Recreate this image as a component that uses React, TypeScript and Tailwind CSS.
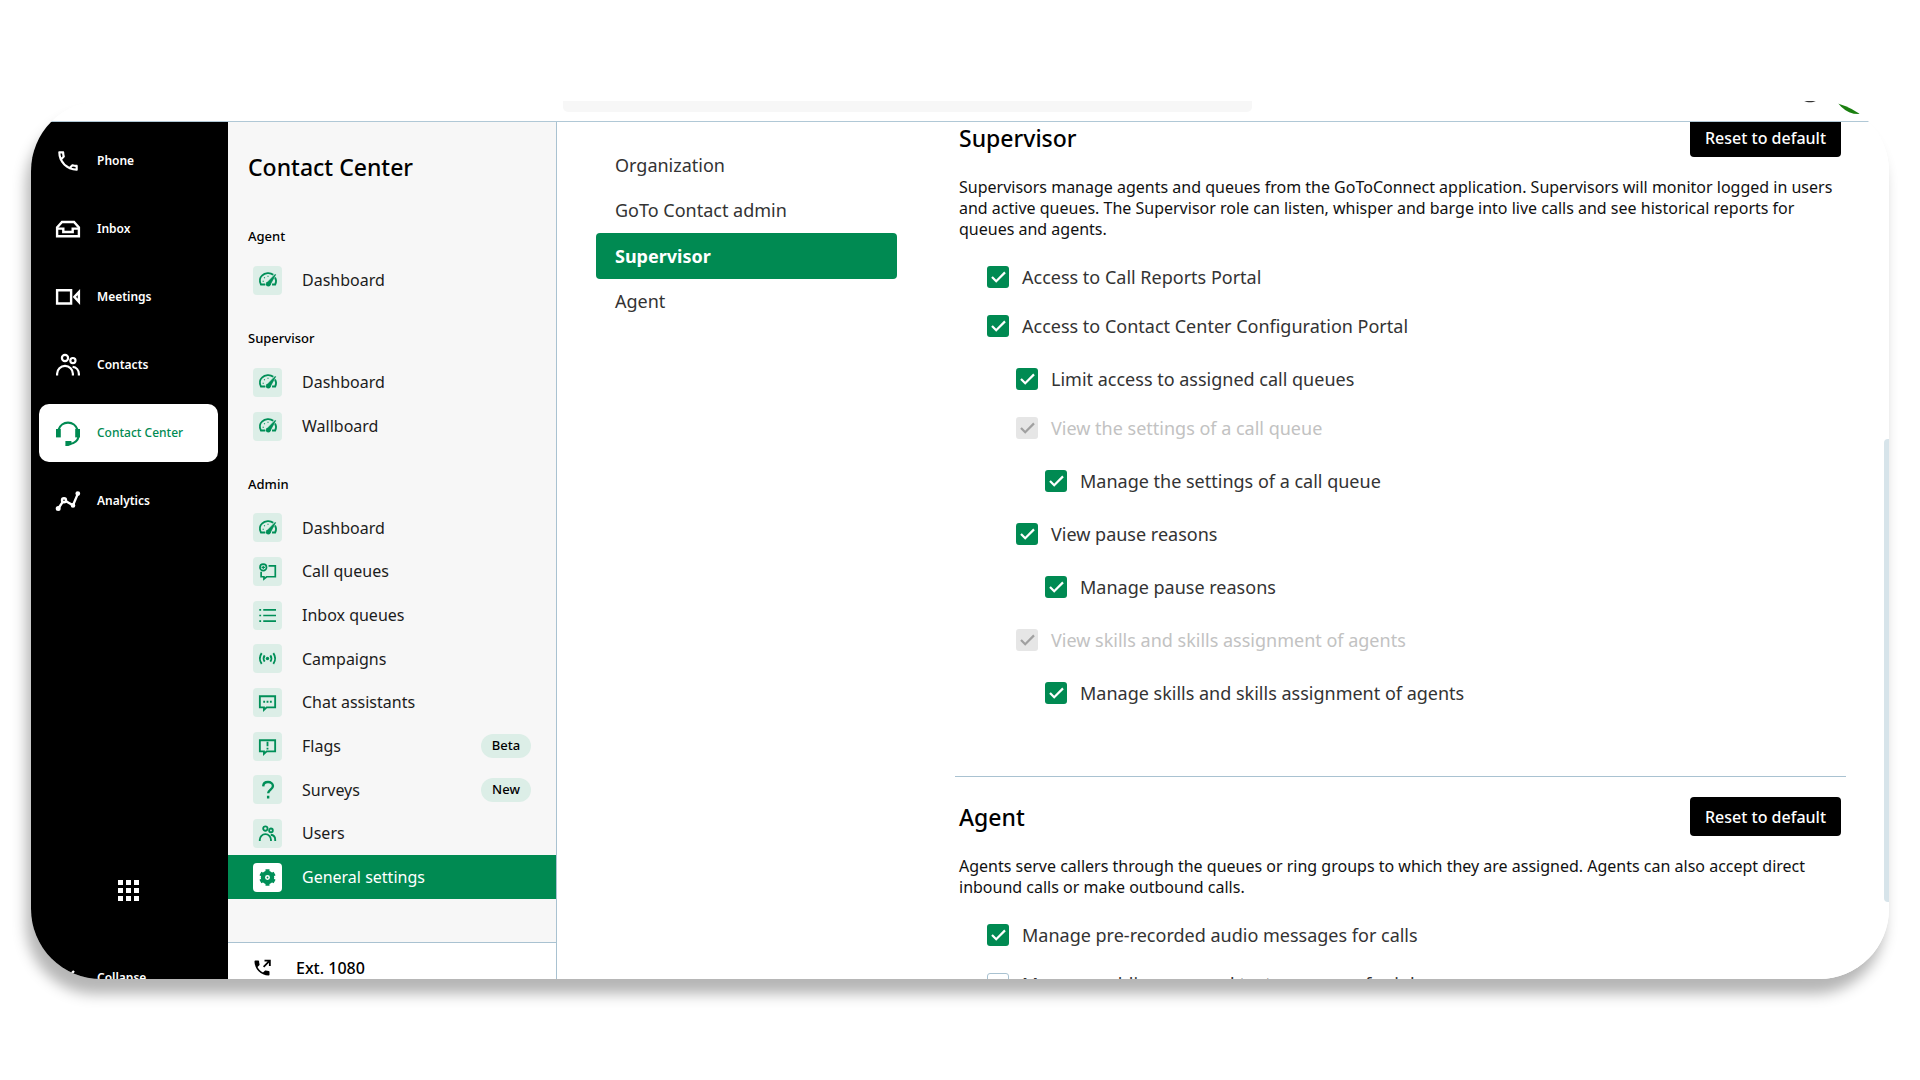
import { useId, type ReactNode } from "react";
import { MdOutlinePhone, MdOutlineHelpOutline } from "react-icons/md";

/* ---------- icons ---------- */

function Stroke({ size, width = 2, children }: { size: number; width?: number; children: ReactNode }) {
  return (
    <svg
      width={size}
      height={size}
      viewBox="0 0 24 24"
      fill="none"
      stroke="currentColor"
      strokeWidth={width}
      overflow="visible"
      aria-hidden="true"
    >
      {children}
    </svg>
  );
}

const InboxIcon = () => (
  <Stroke size={24} width={2.4}>
    <path d="M1.1 19.2V10.4L6 5h12l4.9 5.4v8.8z" />
    <path d="M1.1 11.6h6.2V15h9.4v-3.4h6.2" />
  </Stroke>
);

const VideoIcon = () => (
  <Stroke size={24} width={2.4}>
    <path d="M1.1 5.3h14v13.2h-14z" />
    <path d="M18.4 11.9 22.9 7v9.8z" />
  </Stroke>
);

const PeopleIcon = ({ size = 24, width = 2.2 }: { size?: number; width?: number }) => (
  <Stroke size={size} width={width}>
    <circle cx="9" cy="5" r="3.1" />
    <circle cx="16.9" cy="7.6" r="2.6" />
    <path d="M1.1 22.6v-1.8a7.9 7.9 0 0 1 15.8 0v1.8" />
    <path d="M16.6 13.8c3.8.4 6.3 3.4 6.3 7.2v1.6" />
  </Stroke>
);

const HeadsetIcon = () => (
  <Stroke size={24} width={2.2}>
    <path d="M2.6 8.6a9.8 9.8 0 0 1 18.8 0" />
    <path d="M0 8h4.8v8.4H0z" fill="currentColor" stroke="none" />
    <path d="M19.2 8H24v8.4h-4.8z" fill="currentColor" stroke="none" />
    <path d="M22.6 15.4c-.8 4.4-4.2 7-8.8 7.6" />
    <path d="M9.4 20h6v3.8l-3 1.2h-3z" fill="currentColor" stroke="none" />
  </Stroke>
);

const AnalyticsIcon = () => (
  <Stroke size={24} width={2.4}>
    <path d="M2 20 6.4 13.4M10 12.2l7 4L22 4.4" />
    <circle cx="8" cy="11.2" r="2" />
    <circle cx="2.2" cy="19.6" r="1.3" fill="currentColor" />
    <circle cx="17" cy="16.4" r="1.1" fill="currentColor" />
    <circle cx="21.8" cy="4.6" r="1.2" fill="currentColor" />
  </Stroke>
);

const GaugeIcon = () => (
  <Stroke size={18} width={2.4}>
    <path d="M8.4 18H2.6C.6 14 1 9 4 6.2 8 2 15 1.6 19 5M21.4 8.6c1.8 3 1.7 6.4.2 9.400h-4.200" />
    <path d="M10.2 16 21.600 4.400l.6.500-7.200 13.300z" fill="currentColor" strokeWidth="0.8" />
    <circle cx="12.4" cy="17.6" r="3.2" fill="currentColor" stroke="none" />
    <path d="M4.8 13.6h1.600M6.800 8.400l1 1M12 6.200v1.600" strokeWidth="1.5" />
  </Stroke>
);

const CallQueueIcon = () => (
  <Stroke size={17} width={2.4}>
    <circle cx="6" cy="6.2" r="4.6" />
    <path d="M6 3.8v4.8M3.6 6.2h4.8" strokeWidth="1.6" />
    <path d="M13.5 4H23v15.4H10.8L7 22.6v-3.200H3v-7" />
  </Stroke>
);

const ListIcon = () => (
  <Stroke size={17} width={2.4}>
    <path d="M6 4h18M6 12h18M6 20h18M.4 4h2.600M.4 12h2.600M.4 20h2.600" />
  </Stroke>
);

const BroadcastIcon = () => (
  <Stroke size={17} width={2.6}>
    <circle cx="12" cy="12" r="2.4" fill="currentColor" stroke="none" />
    <path d="M8 7.6c-1.800 2.600-1.800 6.200 0 8.800M16 7.600c1.800 2.600 1.800 6.200 0 8.800" />
    <path d="M3.8 4.4c-3.200 4.600-3.200 10.600 0 15.200M20.200 4.400c3.200 4.600 3.200 10.600 0 15.200" />
  </Stroke>
);

const ChatIcon = () => (
  <Stroke size={17} width={2.6}>
    <path d="M1.2 3.2h21.600v15.600h-12L7 22.400v-3.600H1.200z" />
    <path d="M6 11h2.600M10.700 11h2.600M15.400 11H18" />
  </Stroke>
);

const FlagIcon = () => (
  <Stroke size={17} width={2.6}>
    <path d="M1.2 3.2h21.600v15.600h-12L7 22.400v-3.600H1.200z" />
    <path d="M12 5.400v6.400M12 13.800v2.400" />
  </Stroke>
);

const QuestionIcon = () => (
  <Stroke size={18} width={3.2}>
    <path d="M5.6 7.2C5.8 3.600 8.400 1.400 12 1.400s6.600 2 6.600 5.400c0 4.400-6.400 5-6.400 9.600M12.200 19.600v3.600" />
  </Stroke>
);

const GearIcon = () => (
  <svg width="17" height="17" viewBox="0 0 24 24" fill="none" overflow="visible" aria-hidden="true">
    <circle cx="12" cy="12" r="6.5" stroke="currentColor" strokeWidth="6" />
    <path
      d="M9.200.4h5.600v5H9.200zM9.200 18.600h5.600v5H9.200zM.6 8.800l2.800-4.900 4.400 2.500L5 11.300zM16.200 17.600l2.800-4.900 4.400 2.500-2.800 4.900zM.6 15.200l4.400-2.500 2.800 4.900-4.400 2.500zM16.200 6.400l4.400-2.500 2.800 4.900-4.400 2.500z"
      fill="currentColor"
    />
    <circle cx="12" cy="12" r="1.3" fill="currentColor" />
  </svg>
);

/* ---------- left rail ---------- */

const railItems = [
  { label: "Phone", icon: <MdOutlinePhone size={26} /> },
  { label: "Inbox", icon: <InboxIcon /> },
  { label: "Meetings", icon: <VideoIcon /> },
  { label: "Contacts", icon: <PeopleIcon /> },
  { label: "Contact Center", icon: <HeadsetIcon />, active: true },
  { label: "Analytics", icon: <AnalyticsIcon /> },
];

function RailItem({ label, icon, active }: { label: string; icon: ReactNode; active?: boolean }) {
  return (
    <a
      href="#"
      aria-current={active ? "page" : undefined}
      className={`flex h-[58px] shrink-0 items-center gap-4 rounded-[10px] pl-4 text-xs ${
        active ? "bg-white font-medium text-[#008a52]" : "font-semibold text-white"
      }`}
    >
      <span className="flex w-[26px] justify-center">{icon}</span>
      {label}
    </a>
  );
}

function Rail() {
  return (
    <nav aria-label="Main" className="flex w-[197px] shrink-0 flex-col bg-black pt-[10px] pr-[10px] pl-2">
      <div className="flex flex-col gap-[10px]">
        {railItems.map((item) => (
          <RailItem key={item.label} {...item} />
        ))}
      </div>
      <button
        type="button"
        aria-label="Apps"
        className="mt-auto mb-12 grid grid-cols-3 gap-[3px] self-center text-white"
      >
        {Array.from({ length: 9 }, (_, i) => (
          <span key={i} className="size-[5px] bg-white" />
        ))}
      </button>
      <div className="-mb-7 shrink-0">
        <RailItem
          label="Collapse"
          icon={
            <Stroke size={24} width={2.4}>
              <path d="M18 5l-7 7 7 7" />
            </Stroke>
          }
        />
      </div>
    </nav>
  );
}

/* ---------- contact center side panel ---------- */

type PanelItem = { label: string; icon: ReactNode; badge?: string; active?: boolean };

const agentItems: PanelItem[] = [{ label: "Dashboard", icon: <GaugeIcon /> }];
const supervisorItems: PanelItem[] = [
  { label: "Dashboard", icon: <GaugeIcon /> },
  { label: "Wallboard", icon: <GaugeIcon /> },
];
const adminItems: PanelItem[] = [
  { label: "Dashboard", icon: <GaugeIcon /> },
  { label: "Call queues", icon: <CallQueueIcon /> },
  { label: "Inbox queues", icon: <ListIcon /> },
  { label: "Campaigns", icon: <BroadcastIcon /> },
  { label: "Chat assistants", icon: <ChatIcon /> },
  { label: "Flags", icon: <FlagIcon />, badge: "Beta" },
  { label: "Surveys", icon: <QuestionIcon />, badge: "New" },
  { label: "Users", icon: <PeopleIcon size={17} width={2.6} /> },
  { label: "General settings", icon: <GearIcon />, active: true },
];

function PanelGroup({ title, items, height }: { title: string; items: PanelItem[]; height: string }) {
  return (
    <section>
      <h3 className="mb-[10px] pl-5 text-[13px] leading-6 font-medium">{title}</h3>
      <ul className={`grid auto-rows-fr ${height}`}>
        {items.map((item) => (
          <li key={item.label}>
            <a
              href="#"
              aria-current={item.active ? "page" : undefined}
              className={`flex h-full items-center pr-[25px] pl-[25px] text-base ${
                item.active ? "bg-[#008a52] text-white" : "text-[#1c1c1c]"
              }`}
            >
              <span
                className={`mr-5 flex size-[29px] shrink-0 items-center justify-center rounded text-[#008f58] ${
                  item.active ? "bg-white" : "bg-[#dceee7]"
                }`}
              >
                {item.icon}
              </span>
              {item.label}
              {item.badge && (
                <span className="ml-auto flex h-6 w-[50px] items-center justify-center rounded-full bg-[#dceee7] text-[13px] font-medium text-black">
                  {item.badge}
                </span>
              )}
            </a>
          </li>
        ))}
      </ul>
    </section>
  );
}

function Panel() {
  return (
    <aside className="flex w-[329px] shrink-0 flex-col border-r border-[#a9c2d1] bg-[#f7f7f7]">
      <h2 className="mt-[29px] mb-[41px] pl-5 text-[23px] leading-8 font-medium">Contact Center</h2>
      <div className="flex flex-1 flex-col gap-6">
        <PanelGroup title="Agent" items={agentItems} height="h-11" />
        <PanelGroup title="Supervisor" items={supervisorItems} height="h-[88px]" />
        <PanelGroup title="Admin" items={adminItems} height="h-[393px]" />
      </div>
      <a
        href="#"
        className="-mb-[14px] flex h-[51px] shrink-0 items-center gap-6 border-t border-[#a9c2d1] bg-white pl-6 text-base font-medium"
      >
        <svg width="20" height="20" viewBox="0 0 24 24" fill="currentColor" aria-hidden="true">
          <path d="M20 15.5c-1.250 0-2.450-.2-3.570-.57-.35-.11-.74-.03-1.020.24l-2.200 2.200c-2.830-1.440-5.150-3.750-6.590-6.590l2.200-2.200c.28-.28.36-.67.25-1.020C8.700 6.450 8.500 5.250 8.500 4c0-.55-.45-1-1-1H4c-.55 0-1 .45-1 1 0 9.390 7.610 17 17 17 .55 0 1-.45 1-1v-3.500c0-.55-.45-1-1-1z" />
          <path d="M15 2v2.200h3.800l-5.600 5.600 1.500 1.500 5.600-5.600V9.500h2.200V2z" />
        </svg>
        Ext. 1080
      </a>
    </aside>
  );
}

/* ---------- settings ---------- */

const roles = ["Organization", "GoTo Contact admin", "Supervisor", "Agent"];

function RoleNav() {
  return (
    <nav aria-label="Roles" className="grid h-[182px] w-[301px] shrink-0 auto-rows-fr">
      {roles.map((role) => (
        <a
          key={role}
          href="#"
          aria-current={role === "Supervisor" ? "true" : undefined}
          className={`flex items-center rounded px-[19px] text-lg ${
            role === "Supervisor" ? "bg-[#008a52] font-bold text-white" : "text-[#333]"
          }`}
        >
          {role}
        </a>
      ))}
    </nav>
  );
}

type Option = { label: string; checked?: boolean; disabled?: boolean; children?: Option[] };

const supervisorOptions: Option[] = [
  { label: "Access to Call Reports Portal", checked: true },
  {
    label: "Access to Contact Center Configuration Portal",
    checked: true,
    children: [
      { label: "Limit access to assigned call queues", checked: true },
      {
        label: "View the settings of a call queue",
        checked: true,
        disabled: true,
        children: [{ label: "Manage the settings of a call queue", checked: true }],
      },
      {
        label: "View pause reasons",
        checked: true,
        children: [{ label: "Manage pause reasons", checked: true }],
      },
      {
        label: "View skills and skills assignment of agents",
        checked: true,
        disabled: true,
        children: [{ label: "Manage skills and skills assignment of agents", checked: true }],
      },
    ],
  },
];

const agentOptions: Option[] = [
  { label: "Manage pre-recorded audio messages for calls", checked: true },
  { label: "Manage public pre-saved text messages for inbox" },
];

function OptionRow({ option }: { option: Option }) {
  const id = useId();
  return (
    <li>
      <div className="flex h-[49px] items-center gap-[13px]">
        <span className="relative flex size-[22px]">
          <input
            id={id}
            type="checkbox"
            defaultChecked={option.checked}
            disabled={option.disabled}
            className="peer size-full appearance-none rounded-[3px] border border-[#a9c2d1] bg-white checked:border-0 checked:bg-[#008a52] disabled:bg-[#e6e6e6]"
          />
          <svg
            viewBox="0 0 22 22"
            fill="none"
            stroke="currentColor"
            strokeWidth="2.2"
            className="pointer-events-none absolute inset-0 hidden text-white peer-checked:block peer-disabled:text-[#a0a0a0]"
            aria-hidden="true"
          >
            <path d="M5 11l4.2 4.2L18 6.4" />
          </svg>
        </span>
        <label htmlFor={id} className={`text-lg ${option.disabled ? "text-[#c2c2c2]" : "text-[#333]"}`}>
          {option.label}
        </label>
      </div>
      {option.children && <OptionList options={option.children} nested />}
    </li>
  );
}

function OptionList({ options, nested }: { options: Option[]; nested?: boolean }) {
  return (
    <ul className={nested ? "py-1 pl-[29px]" : "pl-7"}>
      {options.map((option) => (
        <OptionRow key={option.label} option={option} />
      ))}
    </ul>
  );
}

function RoleSection({ title, text, options }: { title: string; text: string; options: Option[] }) {
  return (
    <section className="pr-[5px] pl-1">
      <div className="flex items-center justify-between">
        <h2 className="text-[23px] leading-8 font-medium">{title}</h2>
        <button
          type="button"
          className="h-[39px] w-[151px] rounded bg-black text-center text-base font-medium text-white"
        >
          Reset to default
        </button>
      </div>
      <p className="mt-5 mb-3 text-base leading-[21px] text-[#111]">{text}</p>
      <OptionList options={options} />
    </section>
  );
}

function Settings() {
  return (
    <main className="relative flex min-w-0 flex-1 items-start overflow-hidden bg-white pr-[43px] pl-[39px]">
      <div className="pt-5">
        <RoleNav />
      </div>
      <div className="-mt-1 ml-[58px] min-w-0 flex-1">
        <RoleSection
          title="Supervisor"
          text="Supervisors manage agents and queues from the GoToConnect application. Supervisors will monitor logged in users and active queues. The Supervisor role can listen, whisper and barge into live calls and see historical reports for queues and agents."
          options={supervisorOptions}
        />
        <hr className="mt-[51px] mb-5 border-[#a9c2d1]" />
        <RoleSection
          title="Agent"
          text="Agents serve callers through the queues or ring groups to which they are assigned. Agents can also accept direct inbound calls or make outbound calls."
          options={agentOptions}
        />
      </div>
      <div className="absolute top-[37%] right-0 h-[54%] w-[5px] rounded-l bg-[#d7e4ea]" />
    </main>
  );
}

/* ---------- header ---------- */

function Header() {
  return (
    <header className="relative flex h-[21px] shrink-0 items-start overflow-hidden border-b border-[#b0c8d6] bg-white pr-[6px] pl-[532px]">
      <input
        type="search"
        aria-label="Search"
        className="-mt-9 h-[47px] w-[689px] shrink-0 rounded-[5px] bg-[#f7f7f7]"
      />
      <button type="button" aria-label="Help" className="-mt-7 mr-2 ml-auto size-8 text-[#333]">
        <MdOutlineHelpOutline size={32} />
      </button>
      <button type="button" aria-label="Profile" className="-mt-9 size-[49px] rounded-full bg-[#1a7f0f]" />
    </header>
  );
}

export default function App() {
  return (
    <div className="h-screen bg-white px-[31px] py-[101px] font-['Noto_Sans',sans-serif] text-black">
      <div className="flex h-full flex-col overflow-hidden rounded-[70px] bg-white shadow-[-5px_15px_14px_rgba(0,0,0,0.29)]">
        <Header />
        <div className="flex min-h-0 flex-1 overflow-hidden">
          <Rail />
          <Panel />
          <Settings />
        </div>
      </div>
    </div>
  );
}
